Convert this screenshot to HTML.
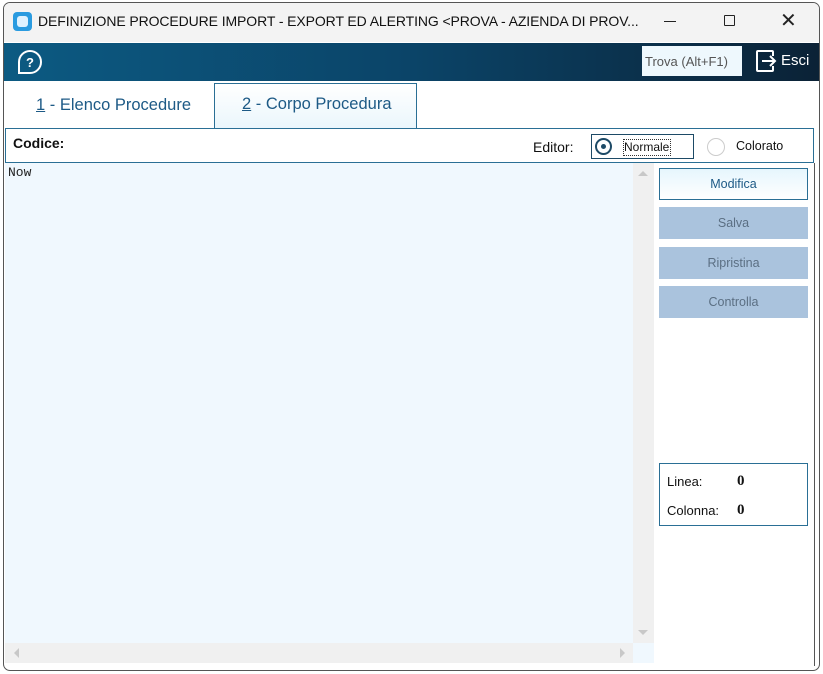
<!DOCTYPE html><html><head><style>
*{margin:0;padding:0;box-sizing:border-box}
body{width:823px;height:674px;background:#fff;font-family:"Liberation Sans",sans-serif;position:relative;overflow:hidden}
.a{position:absolute}
.win{left:3px;top:2px;width:817px;height:669px;border:1px solid #555;border-radius:7px;background:#fff;overflow:hidden}
</style></head><body>
<div class="a win"></div>
<div class="a" style="left:4px;top:3px;width:815px;height:39px;background:#f3f3f3;border-radius:6px 6px 0 0"></div>
<div class="a" style="left:13px;top:12px;width:19px;height:19px;background:#2a9be0;border-radius:4px"><div class="a" style="left:4px;top:4px;width:11px;height:11px;background:#dff2ff;border-radius:3px"></div></div>
<div class="a" style="left:38px;top:13px;font-size:14px;color:#111;letter-spacing:-0.1px;white-space:nowrap">DEFINIZIONE PROCEDURE IMPORT - EXPORT ED ALERTING &lt;PROVA - AZIENDA DI PROV...</div>
<div class="a" style="left:664px;top:21px;width:12px;height:1px;background:#222"></div>
<div class="a" style="left:724px;top:15px;width:11px;height:11px;border:1px solid #222;border-radius:1px"></div>
<div class="a" style="left:780px;top:8px;font-size:20px;color:#222">✕</div>
<div class="a" style="left:4px;top:43px;width:815px;height:38px;background:linear-gradient(90deg,#0c5a82,#0b4468 50%,#0b2236)"></div>
<svg class="a" style="left:17px;top:49px" width="26" height="26" viewBox="0 0 26 26"><path d="M13 2a11 11 0 1 1 0 22H2V13A11 11 0 0 1 13 2z" fill="none" stroke="#fff" stroke-width="2"/><text x="13" y="18" font-size="13" font-weight="bold" fill="#fff" text-anchor="middle" font-family="Liberation Sans">?</text></svg>
<div class="a" style="left:642px;top:46px;width:100px;height:30px;background:#eef8fd;font-size:13px;color:#555;padding:8px 0 0 3px">Trova (Alt+F1)</div>
<svg class="a" style="left:754px;top:49px" width="24" height="24" viewBox="0 0 24 24"><path d="M19 7V3a1 1 0 0 0-1-1H4a1 1 0 0 0-1 1v18a1 1 0 0 0 1 1h14a1 1 0 0 0 1-1v-4" fill="none" stroke="#fff" stroke-width="2"/><path d="M8 12h13M16 7l5 5-5 5" fill="none" stroke="#fff" stroke-width="2"/></svg>
<div class="a" style="left:781px;top:52px;font-size:15px;color:#fff">Esci</div>
<div class="a" style="left:36px;top:96px;font-size:16.5px;color:#1d5a86"><u>1</u> - Elenco Procedure</div>
<div class="a" style="left:214px;top:83px;width:203px;height:46px;background:linear-gradient(#fff,#eaf6fc);border:1px solid #2a6f95;border-bottom:none"></div>
<div class="a" style="left:242px;top:95px;font-size:16.5px;color:#1d5a86"><u>2</u> - Corpo Procedura</div>
<div class="a" style="left:5px;top:128px;width:809px;height:35px;border:1px solid #2a6f95;background:#fff"></div>
<div class="a" style="left:13px;top:135px;font-size:14px;font-weight:bold;color:#111">Codice:</div>
<div class="a" style="left:533px;top:139px;font-size:14px;color:#111">Editor:</div>
<div class="a" style="left:591px;top:134px;width:103px;height:25px;border:1px solid #1d4a66"></div>
<div class="a" style="left:595px;top:138px;width:17px;height:17px;border:2px solid #1d4a66;border-radius:50%"><div class="a" style="left:4px;top:4px;width:5px;height:5px;background:#1d4a66;border-radius:50%"></div></div>
<div class="a" style="left:623px;top:139px;font-size:12px;color:#111;border:1px dotted #333;padding:0 1px 1px 0">Normale</div>
<div class="a" style="left:707px;top:138px;width:18px;height:18px;border:1px solid #ccc;border-radius:50%"></div>
<div class="a" style="left:736px;top:139px;font-size:12.5px;color:#111">Colorato</div>
<div class="a" style="left:5px;top:163px;width:649px;height:500px;background:#f0f8fe"></div>
<div class="a" style="left:8px;top:165px;font-family:'Liberation Mono',monospace;font-size:13px;color:#222">Now</div>
<div class="a" style="left:633px;top:163px;width:21px;height:480px;background:#f0f0f0"></div>
<div class="a" style="left:5px;top:643px;width:628px;height:20px;background:#f0f0f0"></div>
<div class="a" style="left:638px;top:171px;border:5px solid transparent;border-bottom:5px solid #c8c8c8;border-top:none"></div>
<div class="a" style="left:638px;top:630px;border:5px solid transparent;border-top:5px solid #c8c8c8;border-bottom:none"></div>
<div class="a" style="left:14px;top:648px;border:5px solid transparent;border-right:5px solid #c8c8c8;border-left:none"></div>
<div class="a" style="left:620px;top:648px;border:5px solid transparent;border-left:5px solid #c8c8c8;border-right:none"></div>
<div class="a" style="left:814px;top:163px;width:1px;height:503px;background:#555"></div>
<div class="a" style="left:659px;top:168px;width:149px;height:32px;border:1px solid #2a6f95;background:linear-gradient(#e6f6fd,#fff);font-size:12.5px;color:#1d5a86;text-align:center;line-height:30px">Modifica</div>
<div class="a" style="left:659px;top:207px;width:149px;height:32px;background:#aac3dd;font-size:12.5px;color:#5b6f83;text-align:center;line-height:32px">Salva</div>
<div class="a" style="left:659px;top:247px;width:149px;height:32px;background:#aac3dd;font-size:12.5px;color:#5b6f83;text-align:center;line-height:32px">Ripristina</div>
<div class="a" style="left:659px;top:286px;width:149px;height:32px;background:#aac3dd;font-size:12.5px;color:#5b6f83;text-align:center;line-height:32px">Controlla</div>
<div class="a" style="left:659px;top:463px;width:149px;height:63px;border:1px solid #2a6f95"></div>
<div class="a" style="left:667px;top:474px;font-size:13px;color:#111">Linea:</div>
<div class="a" style="left:737px;top:473px;font-size:15px;font-weight:bold;color:#111;font-family:'Liberation Serif',serif">0</div>
<div class="a" style="left:667px;top:503px;font-size:13px;color:#111">Colonna:</div>
<div class="a" style="left:737px;top:502px;font-size:15px;font-weight:bold;color:#111;font-family:'Liberation Serif',serif">0</div>
</body></html>
